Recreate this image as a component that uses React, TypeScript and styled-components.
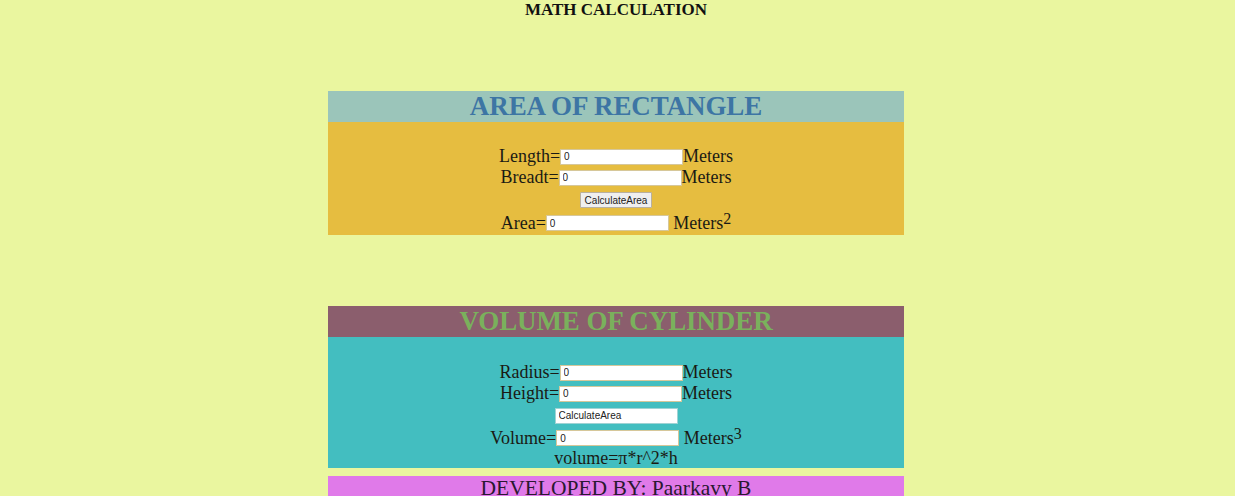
import React from "react";
import styled, { createGlobalStyle } from "styled-components";

const Global = createGlobalStyle`
  html, body { margin: 0; padding: 0; }
  body {
    background: #eaf69f;
    font-family: "Liberation Serif", "Times New Roman", serif;
    color: #111;
  }
`;

const Page = styled.div`
  display: flex;
  flex-direction: column;
  align-items: center;
  padding-right: 3px;
`;

const PageTitle = styled.h1`
  margin: 0;
  font-size: 17px;
  font-weight: bold;
  line-height: 19px;
  height: 91px;
  color: #111;
`;

const Section = styled.section<{ $gapAfter: number }>`
  width: 576px;
  display: flex;
  flex-direction: column;
  margin-bottom: ${(p) => p.$gapAfter}px;
`;

const Heading = styled.h2<{ $bg: string; $fg: string }>`
  margin: 0;
  height: 31px;
  line-height: 30px;
  background: ${(p) => p.$bg};
  color: ${(p) => p.$fg};
  font-size: 27px;
  font-weight: bold;
  text-align: center;
  letter-spacing: -0.1px;
`;

const Body = styled.div<{ $bg: string; $h: number; $top: number }>`
  background: ${(p) => p.$bg};
  height: ${(p) => p.$h}px;
  padding-top: ${(p) => p.$top}px;
  box-sizing: border-box;
  display: flex;
  flex-direction: column;
  color: #1a1a14;
  overflow: hidden;
`;

const Row = styled.div<{ $h?: number }>`
  height: ${(p) => p.$h ?? 21}px;
  flex-shrink: 0;
  display: flex;
  align-items: center;
  justify-content: center;
  font-size: 18px;
  white-space: pre;
`;

const Field = styled.input`
  width: 123px;
  height: 16px;
  box-sizing: border-box;
  padding: 0 0 0 3px;
  margin: 0;
  border: 1px solid #d6c79a;
  background: #fff;
  font-family: "Liberation Sans", Arial, sans-serif;
  font-size: 10px;
  color: #222;
  outline: none;
`;

const ButtonField = styled(Field)`
  border-color: #9fd3d4;
`;

const CalcButton = styled.button`
  height: 16px;
  padding: 0 4px;
  margin: 0;
  font-family: "Liberation Sans", Arial, sans-serif;
  font-size: 10px;
  background: #efefef;
  border: 1px solid #b8b0a0;
  border-radius: 1px;
  color: #222;
`;

const Sup = styled.sup`
  font-size: 16px;
  line-height: 0;
  position: relative;
  top: -4px;
  vertical-align: super;
`;

const Footer = styled.footer`
  width: 576px;
  height: 30px;
  background: #e07ae9;
  color: #2a1830;
  font-size: 21.5px;
  line-height: 25px;
  text-align: center;
`;

export default function App() {
  return (
    <>
      <Global />
      <Page>
        <PageTitle>MATH CALCULATION</PageTitle>

        <Section $gapAfter={71}>
          <Heading $bg="#9bc5ba" $fg="#3d75a4">AREA OF RECTANGLE</Heading>
          <Body $bg="#e6bd40" $h={113} $top={24}>
            <Row>
              Length=<Field defaultValue="0" />Meters
            </Row>
            <Row>
              Breadt=<Field defaultValue="0" />Meters
            </Row>
            <Row $h={24}>
              <CalcButton>CalculateArea</CalcButton>
            </Row>
            <Row $h={22}>
              Area=<Field defaultValue="0" /> Meters<Sup>2</Sup>
            </Row>
          </Body>
        </Section>

        <Section $gapAfter={8}>
          <Heading $bg="#8b5e6d" $fg="#7ab15c">VOLUME OF CYLINDER</Heading>
          <Body $bg="#43bec0" $h={131} $top={25}>
            <Row>
              Radius=<Field defaultValue="0" />Meters
            </Row>
            <Row>
              Height=<Field defaultValue="0" />Meters
            </Row>
            <Row $h={23}>
              <ButtonField defaultValue="CalculateArea" />
            </Row>
            <Row $h={22}>
              Volume=<Field defaultValue="0" /> Meters<Sup>3</Sup>
            </Row>
            <Row $h={19}>volume=π*r^2*h</Row>
          </Body>
        </Section>

        <Footer>DEVELOPED BY: Paarkavy B</Footer>
      </Page>
    </>
  );
}
